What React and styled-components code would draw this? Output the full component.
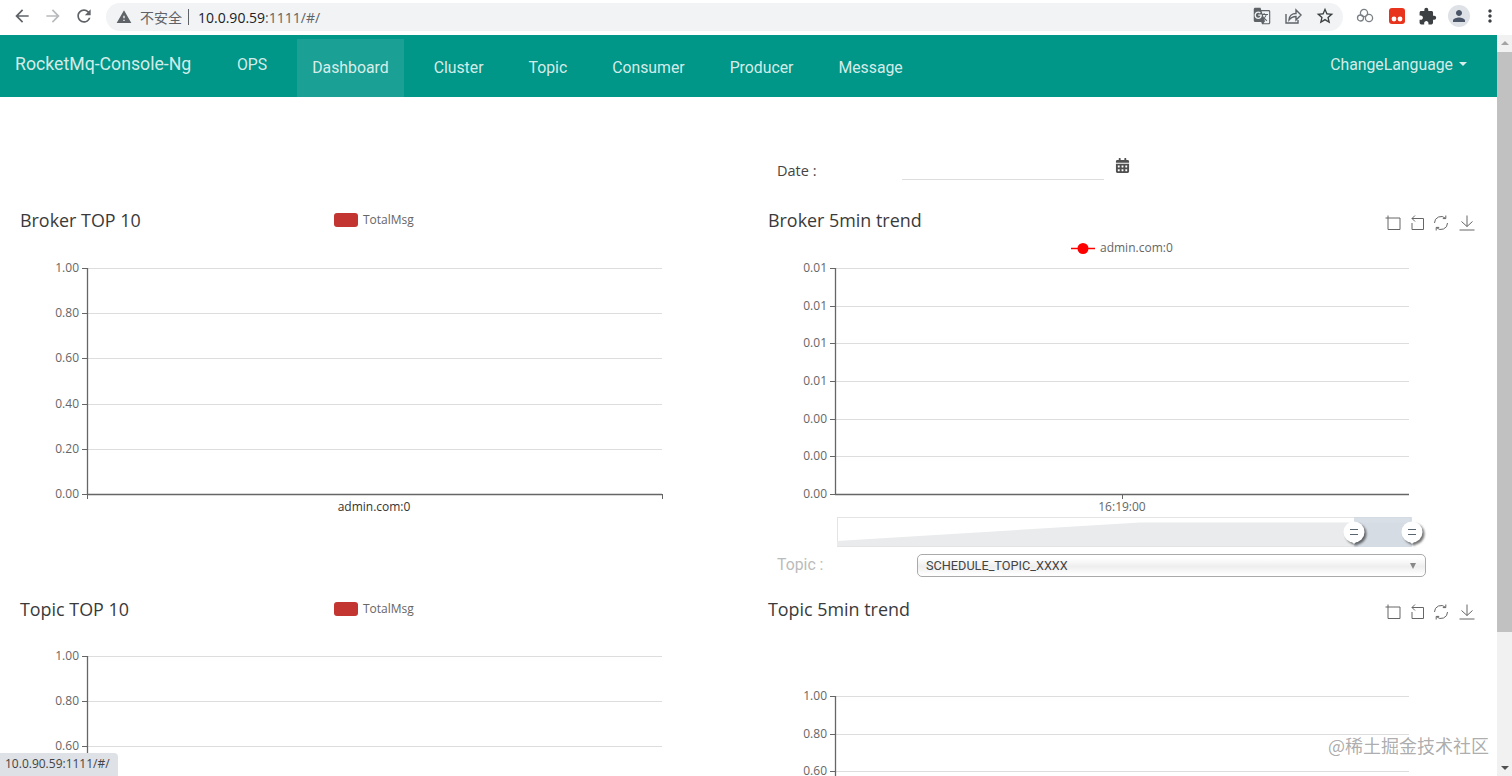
import React from "react";
import styled, { createGlobalStyle } from "styled-components";
import {
  MdArrowBack,
  MdArrowForward,
  MdRefresh,
  MdWarning,
  MdGTranslate,
  MdStarBorder,
  MdExtension,
  MdPerson,
  MdMoreVert,
} from "react-icons/md";
import { FaCalendarAlt } from "react-icons/fa";

const GlobalStyle = createGlobalStyle`
  html, body {
    margin: 0;
    padding: 0;
    background: #fff;
    overflow: hidden;
  }
  * { box-sizing: border-box; }
`;

const Page = styled.div`
  position: relative;
  display: flex;
  flex-direction: column;
  width: 1512px;
  height: 776px;
  overflow: hidden;
  font-family: Roboto, "Noto Sans CJK SC", sans-serif;
  color: #333;
`;

/* browser chrome */
const BrowserBar = styled.div`
  display: flex;
  align-items: center;
  flex: 0 0 35px;
  padding-bottom: 3px;
  background: #fff;
`;
const NavButtons = styled.div`
  display: flex;
  align-items: center;
  flex: 0 0 106px;
  gap: 11px;
  padding-left: 12px;
  font-size: 20px;
  color: #5f6368;
`;
const AddressPill = styled.div`
  display: flex;
  align-items: center;
  flex: 0 0 1237px;
  height: 28px;
  margin-top: 2px;
  padding: 0 8px 0 10px;
  border-radius: 14px;
  background: #f1f3f4;
`;
const Insecure = styled.span`
  margin-left: 8px;
  font-size: 14px;
  color: #5f6368;
  font-family: "Noto Sans CJK SC", sans-serif;
`;
const UrlDivider = styled.span`
  width: 1px;
  height: 16px;
  margin: 0 9px 0 6px;
  background: #5f6368;
`;
const Url = styled.span`
  font-size: 14px;
  font-family: "Open Sans", sans-serif;
  color: #5f6368;
`;
const UrlHost = styled.span`
  color: #202124;
`;
const PillActions = styled.div`
  display: flex;
  align-items: center;
  gap: 13px;
  margin: -2px 0 0 auto;
  color: #5f6368;
`;
const Extensions = styled.div`
  display: flex;
  align-items: center;
  margin-left: 5px;
  color: #5f6368;
`;
const IconSlot = styled.span`
  display: flex;
  align-items: center;
  justify-content: center;
  flex: 0 0 ${(p) => p.$width || "31px"};
`;
const Avatar = styled.span`
  display: flex;
  align-items: center;
  justify-content: center;
  width: 22px;
  height: 22px;
  border-radius: 50%;
  background: #dee1e6;
  color: #4a5568;
`;

const Body = styled.div`
  display: flex;
  flex: 1;
  min-height: 0;
`;
const Main = styled.div`
  flex: 1;
  min-width: 0;
  overflow: hidden;
`;

/* top navbar */
const Navbar = styled.nav`
  display: flex;
  align-items: stretch;
  height: 62px;
  padding-left: 15px;
  background: #009688;
  color: rgba(255, 255, 255, 0.84);
`;
const Brand = styled.span`
  display: flex;
  align-items: center;
  flex: 0 0 192px;
  height: 58px;
  font-size: 17.7px;
`;
const NavList = styled.div`
  display: flex;
  gap: 15px;
  margin-left: 15px;
`;
const NavItem = styled.a`
  display: flex;
  align-items: center;
  padding: 0 15px ${(p) => (p.$plain ? "0" : "2px")};
  margin-top: ${(p) => (p.$plain ? "0" : "4px")};
  height: 58px;
  font-size: 15.8px;
  background: ${(p) => (p.$active ? "rgba(255,255,255,0.1)" : "transparent")};
`;
const LangMenu = styled.div`
  display: flex;
  align-items: center;
  gap: 6px;
  height: 58px;
  margin-left: auto;
  padding-right: 30px;
  font-size: 15.8px;
`;
const Caret = styled.span`
  width: 0;
  height: 0;
  border-top: 4px solid currentColor;
  border-left: 4px solid transparent;
  border-right: 4px solid transparent;
`;

/* dashboard */
const TwoCols = styled.div`
  display: grid;
  grid-template-columns: 748px 749px;
`;
const DateRow = styled(TwoCols)`
  height: 108px;
`;
const DateField = styled.div`
  display: flex;
  align-items: flex-start;
  grid-column: 2;
  padding: 59px 0 0 29px;
`;
const DateLabel = styled.label`
  flex: 0 0 125px;
  font-family: "Open Sans", sans-serif;
  font-size: 14.5px;
  line-height: 30px;
  color: #444;
`;
const DateInput = styled.div`
  width: 202px;
  height: 24px;
  border-bottom: 1px solid #ddd;
`;
const CalendarButton = styled.span`
  display: flex;
  margin: 2px 0 0 11px;
  font-size: 15px;
  color: #505050;
`;

const Panel = styled.section`
  display: flex;
  flex-direction: column;
  height: ${(p) => p.$height || "auto"};
`;
const PanelHead = styled.header`
  display: flex;
  align-items: center;
  flex: 0 0 30px;
  padding-left: 20px;
`;
const PanelTitle = styled.h3`
  flex: 0 0 314px;
  margin: -1px 0 0;
  font-family: "Open Sans", sans-serif;
  font-size: 17.9px;
  font-weight: 400;
  color: #3a3a3a;
`;
const Legend = styled.div`
  display: flex;
  align-items: center;
  gap: 5px;
  font-family: "Open Sans", sans-serif;
  font-size: 12px;
  color: #666;
`;
const LegendText = styled.span`
  margin-top: -2px;
`;
const Swatch = styled.span`
  width: 24px;
  height: 14px;
  border-radius: 3px;
  background: #c23531;
`;
const Toolbox = styled.div`
  display: flex;
  gap: 8px;
  margin: 6px 22px 0 auto;
`;
const ToolIcon = styled.svg`
  width: 16px;
  height: 16px;
  margin-left: ${(p) => p.$shift || 0};
  fill: none;
  stroke: #666;
  stroke-width: 1;
`;

const ChartSvg = styled.svg`
  display: block;
  flex: none;
  width: 748px;
`;
const AxisLabel = styled.text`
  font-family: "Open Sans", sans-serif;
  font-size: 12px;
  fill: ${(p) => p.$fill || "#666"};
`;
const Handle = styled.g`
  filter: drop-shadow(2px 2px 1px rgba(0, 0, 0, 0.55));
`;

const TopicRow = styled.div`
  display: flex;
  align-items: center;
  flex: 0 0 23px;
  padding-left: 29px;
`;
const TopicLabel = styled.label`
  flex: 0 0 140px;
  margin-top: -3px;
  font-size: 15.8px;
  color: #bbb;
`;
const TopicSelect = styled.div`
  display: flex;
  align-items: center;
  justify-content: space-between;
  width: 509px;
  height: 23px;
  padding: 0 9px 0 8px;
  border: 1px solid #aaa;
  border-radius: 5px;
  background: linear-gradient(#fff 15%, #eee 55%, #fff 95%);
  font-size: 12.7px;
  color: #444;
`;
const SelectArrow = styled.span`
  width: 0;
  height: 0;
  border-top: 6px solid #888;
  border-left: 3.5px solid transparent;
  border-right: 3.5px solid transparent;
`;

/* page scrollbar */
const Scrollbar = styled.div`
  display: flex;
  flex-direction: column;
  align-items: center;
  flex: 0 0 15px;
  background: #f1f1f1;
`;
const ScrollArrow = styled.span`
  width: 0;
  height: 0;
  margin: ${(p) => (p.$down ? "auto 0 6px" : "6px 0 0")};
  border-left: 4px solid transparent;
  border-right: 4px solid transparent;
  border-top: ${(p) => (p.$down ? "4px solid #505050" : "none")};
  border-bottom: ${(p) => (p.$down ? "none" : "4px solid #a3a3a3")};
`;
const ScrollThumb = styled.span`
  width: 100%;
  height: 580px;
  margin-top: 7px;
  background: #c1c1c1;
`;

/* overlays */
const StatusBubble = styled.div`
  position: absolute;
  left: 0;
  bottom: 0;
  width: 118px;
  height: 23px;
  padding-left: 5px;
  border-top-right-radius: 4px;
  background: #dee1e6;
  font-family: "Open Sans", sans-serif;
  font-size: 12px;
  line-height: 22px;
  color: #444;
`;
const Watermark = styled.div`
  position: absolute;
  left: 1328px;
  top: 733px;
  font-family: "Noto Sans CJK SC", sans-serif;
  font-size: 18px;
  line-height: 24px;
  color: rgba(120, 120, 120, 0.62);
`;

const ShareIcon = () => (
  <svg width="18" height="18" viewBox="0 0 18 18" fill="none" stroke="#5f6368" strokeWidth="1.4">
    <path d="M2 7v9h12v-3" />
    <path d="M5 13c0-4 3-6.5 7-6.5V3l5 5-5 5V9.5c-3 0-5 1-7 3.5z" />
  </svg>
);

const CloudLinkIcon = () => (
  <svg width="18" height="18" viewBox="0 0 18 18" fill="none" stroke="#7a7f85" strokeWidth="1.3">
    <circle cx="8" cy="6" r="3.6" />
    <circle cx="4.5" cy="11" r="3" />
    <circle cx="13" cy="11" r="3.6" />
  </svg>
);

const RedAppIcon = () => (
  <svg width="16" height="16" viewBox="0 0 16 16">
    <rect width="16" height="16" rx="3" fill="#e8341c" />
    <circle cx="5" cy="11" r="2.4" fill="#fff" />
    <circle cx="11" cy="11" r="2.4" fill="#fff" />
  </svg>
);

const ZoomTool = () => (
  <ToolIcon viewBox="0 0 16 16">
    <path d="M3 0.5V14.5H15V3H0.5" />
  </ToolIcon>
);
const BackTool = () => (
  <ToolIcon viewBox="0 0 16 16">
    <path d="M6 0.5L3 3.5L6 6.5M3 3.5H14.5V14.5H3V8" />
  </ToolIcon>
);
const RestoreTool = () => (
  <ToolIcon viewBox="0 0 16 16">
    <path d="M1.5 8A6.5 6.5 0 0 1 12.5 3.3M14.5 8A6.5 6.5 0 0 1 3.5 12.7" />
    <path d="M12.8 0.5V3.6H9.8M3.2 15.5V12.4H6.2" />
  </ToolIcon>
);
const SaveTool = () => (
  <ToolIcon viewBox="0 0 16 16" $shift="2px">
    <path d="M8 0.5V11.5M2.5 6.5L8 11.5L13.5 6.5M0.5 15H15.5" />
  </ToolIcon>
);

function Tools() {
  return (
    <Toolbox>
      <ZoomTool />
      <BackTool />
      <RestoreTool />
      <SaveTool />
    </Toolbox>
  );
}

const SliderHandle = ({ x }) => (
  <Handle>
    <circle cx={x} cy="62" r="10.5" fill="#fff" />
    <path d={`M${x} 72l-2 0 2 2 2-2z`} fill="#fff" />
    <path d={`M${x - 4} 59.5h8M${x - 4} 64.5h8`} stroke="#5a6570" strokeWidth="1.2" />
  </Handle>
);

function DataZoom({ y }) {
  // drawn in chart coordinates, the 30px band starts at y
  return (
    <g transform={`translate(0 ${y - 47})`}>
      <rect x="89.5" y="47.5" width="573" height="29" fill="#fff" stroke="#e4e4e4" />
      <path d="M89 71L392 52.5H662V76H89z" fill="#e9ebec" />
      <rect x="606" y="47" width="58" height="30" fill="#d2d9e3" opacity="0.85" />
      <SliderHandle x={606} />
      <SliderHandle x={664} />
    </g>
  );
}

function Chart({ height, top, gap, right = 662, labels, xLabel, xTick, xFill, series, zoomAt }) {
  const left = 87;
  const bottom = xLabel ? top + gap * (labels.length - 1) : height;
  return (
    <ChartSvg height={height} viewBox={`0 0 748 ${height}`}>
      {series && (
        <g>
          <path d="M323 13.5H347" stroke="#f00" strokeWidth="1.5" />
          <circle cx="335" cy="13.5" r="5.5" fill="#f00" />
          <AxisLabel x="352" y="17">{series}</AxisLabel>
        </g>
      )}
      {labels.map((label, i) => {
        const y = Math.round(top + gap * i) + 0.5;
        const isBase = xLabel && i === labels.length - 1;
        return (
          <g key={i}>
            <path
              d={`M${left} ${y}H${right}`}
              stroke={isBase ? "#666" : "#ddd"}
              strokeWidth={isBase ? 1.4 : 1.2}
            />
            <path d={`M82 ${y}H${left}`} stroke="#666" />
            <AxisLabel x="79" y={y + 3} textAnchor="end">{label}</AxisLabel>
          </g>
        );
      })}
      <path d={`M${left}.5 ${top}V${bottom}`} stroke="#666" strokeWidth="1.3" />
      {xLabel && (
        <g>
          {xTick.map((x) => (
            <path key={x} d={`M${x}.5 ${bottom}v5`} stroke="#666" />
          ))}
          <AxisLabel x={xTick.length === 1 ? xTick[0] : 374} y={bottom + 17} textAnchor="middle" $fill={xFill}>
            {xLabel}
          </AxisLabel>
        </g>
      )}
      {zoomAt && <DataZoom y={zoomAt} />}
    </ChartSvg>
  );
}

const navItems = ["Dashboard", "Cluster", "Topic", "Consumer", "Producer", "Message"];
const countLabels = ["1.00", "0.80", "0.60", "0.40", "0.20", "0.00"];
const trendLabels = ["0.01", "0.01", "0.01", "0.01", "0.00", "0.00", "0.00"];
const visibleLabels = ["1.00", "0.80", "0.60"];

export default function App() {
  return (
    <Page>
      <GlobalStyle />
      <BrowserBar>
        <NavButtons>
          <MdArrowBack />
          <MdArrowForward color="#b8babd" />
          <MdRefresh />
        </NavButtons>
        <AddressPill>
          <MdWarning size={16} color="#5f6368" />
          <Insecure>不安全</Insecure>
          <UrlDivider />
          <Url>
            <UrlHost>10.0.90.59</UrlHost>:1111/#/
          </Url>
          <PillActions>
            <MdGTranslate size={18} />
            <ShareIcon />
            <MdStarBorder size={20} color="#3c4043" />
          </PillActions>
        </AddressPill>
        <Extensions>
          <IconSlot $width="33px">
            <CloudLinkIcon />
          </IconSlot>
          <IconSlot>
            <RedAppIcon />
          </IconSlot>
          <IconSlot>
            <MdExtension size={19} color="#3c4043" />
          </IconSlot>
          <IconSlot>
            <Avatar>
              <MdPerson size={18} />
            </Avatar>
          </IconSlot>
          <IconSlot>
            <MdMoreVert size={20} color="#3c4043" />
          </IconSlot>
        </Extensions>
      </BrowserBar>
      <Body>
        <Main>
          <Navbar>
            <Brand>RocketMq-Console-Ng</Brand>
            <NavList>
              <NavItem $plain>OPS</NavItem>
              {navItems.map((name) => (
                <NavItem key={name} $active={name === "Dashboard"}>
                  {name}
                </NavItem>
              ))}
            </NavList>
            <LangMenu>
              ChangeLanguage
              <Caret />
            </LangMenu>
          </Navbar>

          <DateRow>
            <DateField>
              <DateLabel>Date :</DateLabel>
              <DateInput />
              <CalendarButton>
                <FaCalendarAlt />
              </CalendarButton>
            </DateField>
          </DateRow>

          <TwoCols>
            <Panel $height="389px">
              <PanelHead>
                <PanelTitle>Broker TOP 10</PanelTitle>
                <Legend>
                  <Swatch />
                  <LegendText>TotalMsg</LegendText>
                </Legend>
              </PanelHead>
              <Chart
                height={290}
                top={33}
                gap={45.2}
                labels={countLabels}
                xLabel="admin.com:0"
                xTick={[87, 662]}
                xFill="#333"
              />
            </Panel>
            <Panel $height="389px">
              <PanelHead>
                <PanelTitle>Broker 5min trend</PanelTitle>
                <Tools />
              </PanelHead>
              <Chart
                height={319}
                top={33}
                gap={37.67}
                right={661}
                labels={trendLabels}
                series="admin.com:0"
                xLabel="16:19:00"
                xTick={[374]}
                zoomAt={282}
              />
              <TopicRow>
                <TopicLabel>Topic :</TopicLabel>
                <TopicSelect>
                  SCHEDULE_TOPIC_XXXX
                  <SelectArrow />
                </TopicSelect>
              </TopicRow>
            </Panel>
            <Panel>
              <PanelHead>
                <PanelTitle>Topic TOP 10</PanelTitle>
                <Legend>
                  <Swatch />
                  <LegendText>TotalMsg</LegendText>
                </Legend>
              </PanelHead>
              <Chart height={152} top={32} gap={45.2} labels={visibleLabels} />
            </Panel>
            <Panel>
              <PanelHead>
                <PanelTitle>Topic 5min trend</PanelTitle>
                <Tools />
              </PanelHead>
              <Chart height={152} top={72} gap={37.5} right={661} labels={visibleLabels} />
            </Panel>
          </TwoCols>
        </Main>
        <Scrollbar>
          <ScrollArrow />
          <ScrollThumb />
          <ScrollArrow $down />
        </Scrollbar>
      </Body>
      <StatusBubble>10.0.90.59:1111/#/</StatusBubble>
      <Watermark>@稀土掘金技术社区</Watermark>
    </Page>
  );
}
